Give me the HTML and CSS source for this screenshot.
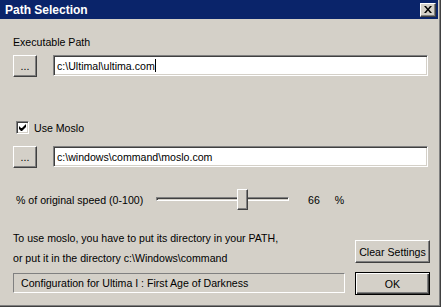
FILE: index.html
```html
<!DOCTYPE html>
<html lang="en">
  <head>
    <meta charset="UTF-8" />
    <title>Path Selection</title>
    <link rel="stylesheet" href="styles.css">
  </head>
  <body>
    <div class="window">
      <div class="title-bar">
        <span class="title">Path Selection</span>
        <button type="button" class="close-btn">
          <svg width="8" height="7" viewBox="0 0 8 7">
            <path d="M0 0h2l2 2.5 2-2.5h2l-3 3.5 3 3.5h-2l-2-2.5-2 2.5h-2l3-3.5z" fill="#000" />
          </svg>
        </button>
      </div>

      <div class="content">
        <div class="label">Executable Path</div>
        <div class="path-row">
          <button type="button" class="btn browse">...</button>
          <div class="field">c:\Ultimal\ultima.com<span class="caret"></span></div>
        </div>

        <div class="check-row">
          <span class="checkbox">
            <svg width="7" height="7" viewBox="0 0 7 7">
              <path d="M0 2v3l2 2h1l4-4v-3l-4 4h-1z" fill="#000" />
            </svg>
          </span>
          <span>Use Moslo</span>
        </div>
        <div class="path-row second">
          <button type="button" class="btn browse">...</button>
          <div class="field">c:\windows\command\moslo.com</div>
        </div>

        <div class="speed-row">
          <span class="speed-label">% of original speed (0-100)</span>
          <div class="slider">
            <div class="track"></div>
            <div class="thumb"></div>
          </div>
          <span class="speed-value">66</span>
          <span class="speed-unit">%</span>
        </div>

        <div class="bottom">
          <div class="bottom-left">
            <p class="hint">To use moslo, you have to put its directory in your PATH,<br>or put it in the directory c:\Windows\command</p>
            <div class="status">Configuration for Ultima I : First Age of Darkness</div>
          </div>
          <div class="bottom-right">
            <button type="button" class="btn action">Clear Settings</button>
            <button type="button" class="btn action default">OK</button>
          </div>
        </div>
      </div>
    </div>
  </body>
</html>
```

FILE: styles.css
```css
body {
  margin: 0;
  padding: 0;
  background-color: #d4d0c8;
  font-family: "Liberation Sans", Arial, sans-serif;
  font-size: 10.6px;
  color: #000;
}

.window {
  box-sizing: border-box;
  width: 441px;
  height: 307px;
  padding: 0 2px 2px 0;
  background-color: #d4d0c8;
  border-right: 1px solid #404040;
  border-bottom: 1px solid #404040;
  box-shadow: inset -1px -1px #808080;
}

.title-bar {
  display: flex;
  align-items: center;
  justify-content: space-between;
  height: 19px;
  padding: 0 2px 0 5px;
  background-color: #0a246a;
}

.title {
  color: #fff;
  font-weight: bold;
  font-size: 12px;
}

.close-btn {
  display: flex;
  align-items: center;
  justify-content: center;
  width: 16px;
  height: 14px;
  padding: 0;
  background-color: #d4d0c8;
  border: 1px solid;
  border-color: #fff #404040 #404040 #fff;
  box-shadow: inset -1px -1px #808080;
}

.content {
  padding-left: 13px;
}

.label {
  margin-top: 16px;
  line-height: 14px;
}

.btn {
  box-sizing: border-box;
  padding: 0;
  font-family: inherit;
  font-size: 10.6px;
  color: #000;
  background-color: #d4d0c8;
  border: 1px solid;
  border-color: #fff #404040 #404040 #fff;
  box-shadow: inset -1px -1px #808080;
}

.path-row {
  display: flex;
  align-items: flex-start;
  gap: 16px;
  margin-top: 6px;
}

.path-row.second {
  margin-top: 12px;
}

.browse {
  width: 24px;
  height: 22px;
  line-height: 18px;
}

.field {
  box-sizing: border-box;
  display: flex;
  align-items: center;
  width: 375px;
  height: 21px;
  padding-left: 3px;
  background-color: #fff;
  border: 1px solid;
  border-color: #808080 #fff #fff #808080;
  box-shadow: inset 1px 1px #404040, inset -1px -1px #d4d0c8;
}

.caret {
  display: inline-block;
  width: 1px;
  height: 13px;
  background-color: #000;
}

.check-row {
  display: flex;
  align-items: center;
  gap: 5px;
  margin-top: 44px;
  padding-left: 3px;
  height: 13px;
}

.checkbox {
  box-sizing: border-box;
  display: flex;
  align-items: center;
  justify-content: center;
  width: 13px;
  height: 13px;
  background-color: #fff;
  border: 1px solid;
  border-color: #808080 #fff #fff #808080;
  box-shadow: inset 1px 1px #404040, inset -1px -1px #d4d0c8;
}

.speed-row {
  display: flex;
  align-items: center;
  height: 21px;
  margin-top: 21px;
  padding-left: 3px;
}

.speed-label {
  width: 140px;
}

.slider {
  position: relative;
  width: 133px;
  height: 21px;
}

.track {
  box-sizing: border-box;
  margin-top: 8px;
  height: 4px;
  border: 1px solid;
  border-color: #808080 #fff #fff #808080;
  box-shadow: inset 1px 1px #404040;
}

.thumb {
  position: absolute;
  left: 81px;
  top: 0;
  box-sizing: border-box;
  width: 11px;
  height: 21px;
  background-color: #d4d0c8;
  border: 1px solid;
  border-color: #fff #404040 #404040 #fff;
  box-shadow: inset -1px -1px #808080;
}

.speed-value {
  margin-left: 19px;
}

.speed-unit {
  margin-left: 15px;
}

.bottom {
  display: flex;
  gap: 10px;
  margin-top: 18px;
}

.hint {
  margin: 0;
  line-height: 20px;
}

.status {
  box-sizing: border-box;
  width: 332px;
  height: 20px;
  margin-top: 5px;
  padding-left: 7px;
  line-height: 18px;
  border: 1px solid;
  border-color: #808080 #fff #fff #808080;
}

.bottom-right {
  display: flex;
  flex-direction: column;
  gap: 9px;
  padding-top: 12px;
}

.action {
  width: 75px;
  height: 23px;
}

.action.default {
  border-color: #000;
  box-shadow: inset 1px 1px #fff, inset -1px -1px #404040, inset -2px -2px #808080;
}
```
